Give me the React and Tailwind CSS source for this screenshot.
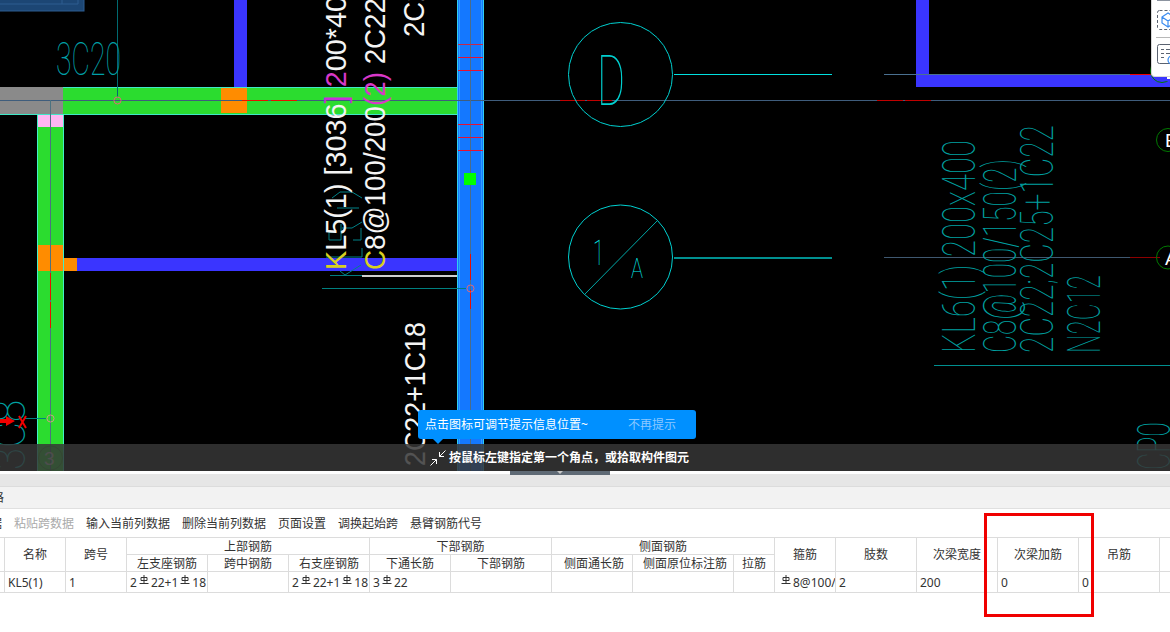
import React from "react";

const UI = { fontFamily: '"Noto Sans", "Noto Sans CJK SC", sans-serif' };
const SLATE = "#3f5d7c";
const TEAL = "#00a0a0";
const THIN = "Roboto";

const rects = [
  [0, 87, 63, 27, "#8a8a8a"],
  [63, 87, 394, 27, "#2bdc2f"],
  [234, 0, 13, 87, "#3a35ff"],
  [221, 88, 26, 25, "#ff8c00"],
  [37, 114, 27, 357, "#2bdc2f"],
  [38, 114, 25, 13, "#ffb6f2"],
  [38, 245, 25, 26, "#ff8c00"],
  [64, 258, 13, 13, "#ff8c00"],
  [77, 258, 380, 13, "#3a35ff"],
  [457, 0, 27, 471, "#1478ff"],
  [929, 74, 241, 13, "#3a35ff"],
  [916, 0, 13, 87, "#3a35ff"],
  [916, 74, 14, 13, "#3a35ff"],
];

const lines = [
  [63, 87.5, 457, 87.5, "#40e8c8"],
  [0, 114.5, 457, 114.5, "#40e8c8"],
  [37.5, 114, 37.5, 471, "#40f0c8"],
  [63.5, 114, 63.5, 471, "#40f0c8"],
  [457.5, 0, 457.5, 471, "#30d0f0"],
  [459.5, 0, 459.5, 471, "#30a0ff"],
  [483.5, 0, 483.5, 471, "#30d0f0"],
  [481.5, 0, 481.5, 471, "#30a0ff"],
  [117.5, 0, 117.5, 97, "#006a70"],
  [0, 100.5, 1170, 100.5, SLATE],
  [50.5, 100, 50.5, 471, "#4c7280"],
  [470.5, 0, 470.5, 471, "#4c6c88"],
  [242, 100.5, 268, 100.5, "#e81000"],
  [271, 100.5, 297, 100.5, "#e81000"],
  [560, 100.5, 585, 100.5, "#c00000"],
  [587, 100.5, 612, 100.5, "#c00000"],
  [877, 100.5, 903, 100.5, "#c00000"],
  [905, 100.5, 931, 100.5, "#c00000"],
  [50.5, 273, 50.5, 300, "#e81000"],
  [50.5, 302, 50.5, 328, "#e81000"],
  [470.5, 254, 470.5, 280, "#e81000"],
  [470.5, 290, 470.5, 309, "#e81000"],
  [458, 44.5, 483, 44.5, "#c82848"],
  [458, 57.5, 483, 57.5, "#e81030"],
  [458, 70.5, 483, 70.5, "#e81030"],
  [458, 124.5, 483, 124.5, "#e81030"],
  [458, 137.5, 483, 137.5, "#e81030"],
  [458, 150.5, 483, 150.5, "#e81030"],
  [322, 288.5, 466, 288.5, "#008080"],
  [362, 275.5, 457, 275.5, "#d0d0d0"],
  [362, 276.5, 457, 276.5, "#d0d0d0"],
  [330, 275.5, 362, 275.5, "#007c80"],
  [25, 418.5, 46, 418.5, "#008080"],
  [674, 74.5, 832, 74.5, "#00e0e0"],
  [674, 257.5, 832, 257.5, "#009090"],
  [674, 258.5, 832, 258.5, "#009090"],
  [884, 74.5, 1130, 74.5, "#4a7090"],
  [1130, 74.5, 1151, 74.5, "#f00000"],
  [884, 257.5, 1130, 257.5, "#3f5870"],
  [1130, 257.5, 1160, 257.5, "#8c0000"],
  [934, 365.5, 1170, 365.5, "#008f8f"],
];

const Rot = ({ x, y, size, length, fill, font, weight, children }) => (
  <text
    transform={`translate(${x} ${y}) rotate(-90)`}
    fontFamily={font || "Liberation Sans"}
    fontWeight={weight}
    fontSize={size}
    fill={fill}
    textLength={length}
    lengthAdjust="spacingAndGlyphs"
  >
    {children}
  </text>
);

const Thin = (props) => <Rot size={46} fill={TEAL} font={THIN} weight={100} {...props} />;

function Canvas() {
  return (
    <svg width="1170" height="471" viewBox="0 0 1170 471" className="block">
      <rect width="1170" height="471" fill="#000" />
      <rect x="-2" y="-2" width="86" height="13" fill="#1c4674" stroke="#2c5c90" />
      <path d="M0 4H78V0M62 0v4" fill="none" stroke="#2c5c90" />

      {rects.map(([x, y, w, h, c], i) => (
        <rect key={i} x={x} y={y} width={w} height={h} fill={c} />
      ))}
      <g shapeRendering="crispEdges">
        {lines.map(([a, b, c, d, s], i) => (
          <line key={i} x1={a} y1={b} x2={c} y2={d} stroke={s} />
        ))}
      </g>
      <rect x="464" y="173" width="12" height="12" fill="#00ff00" />

      <g fill="none" stroke="#e06878">
        <circle cx="117.5" cy="100.5" r="3.5" />
        <circle cx="470.5" cy="288.5" r="3.5" />
        <circle cx="50.5" cy="418.5" r="3.5" stroke="#c8a080" />
      </g>

      {/* axis bubbles */}
      <g fill="none" stroke="#00d0d0">
        <circle cx="620.5" cy="74.5" r="52" />
        <circle cx="620.5" cy="257" r="52" />
        <line x1="584" y1="295" x2="657.5" y2="220.5" stroke="#00a8a8" />
      </g>
      <text x="597" y="105" fontFamily={THIN} fontWeight="100" fontSize="70" fill="#00d0d0" textLength="28" lengthAdjust="spacingAndGlyphs">D</text>
      <text x="593" y="265" fontFamily={THIN} fontWeight="100" fontSize="35" fill="#00f0f0" textLength="11" lengthAdjust="spacingAndGlyphs">1</text>
      <text x="631" y="278" fontFamily={THIN} fontWeight="100" fontSize="28" fill="#00f0f0" textLength="12" lengthAdjust="spacingAndGlyphs">A</text>
      <text x="56" y="75" fontFamily={THIN} fontWeight="100" fontSize="46" fill="#00a0a8" textLength="65" lengthAdjust="spacingAndGlyphs">3C20</text>

      {/* small teal label under the white text */}
      <g fill="none" stroke="#008288">
        <path d="M362 198l-10-6h-12l-8 6M362 222l-10 6h-10M337 208h22M336 232h-7v8h12v-16M361 228v12h-8M362 248v9h-36M361 265l-16 10-5-4" />
      </g>
      <Rot x={346} y={270} size={30} length={290} fill="#f4f4f4">
        <tspan fill="#d8d020">K</tspan>L5(1) [3036<tspan fill="#c830d8">]</tspan> <tspan fill="#d838c8">2</tspan>00*400
      </Rot>
      <Rot x={385} y={270} size={30} length={272} fill="#f4f4f4">
        <tspan fill="#d8d020">C</tspan>8@100/200<tspan fill="#d838c8">(2)</tspan> 2C22
      </Rot>
      <Rot x={424} y={37} size={30} length={66} fill="#f4f4f4">2C22</Rot>
      <Rot x={425} y={466} size={30} length={144} fill="#f4f4f4">2C22+1C18</Rot>

      {/* teal annotation on the right */}
      <Thin x={975} y={353} length={213}>KL6(1) 200x400</Thin>
      <Thin x={1016} y={353} length={194}>C8@100/150(2)</Thin>
      <Thin x={1053} y={353} length={228}>2C22;2C25+1C22</Thin>
      <Thin x={1100} y={353} length={78}>N2C12</Thin>
      <Thin x={1170} y={470} length={48}>CP0</Thin>
      <Thin x={25} y={470} length={70}>3C8</Thin>

      {/* right axis bubbles */}
      <g fill="none" stroke="#007a00">
        <circle cx="1168" cy="140" r="11.5" />
        <circle cx="1168" cy="257.5" r="11.5" />
        <circle cx="1162" cy="71" r="11.5" />
        <circle cx="50.5" cy="458" r="12" stroke="#2a9a2a" />
      </g>
      <text x="1165" y="147" fontFamily="Liberation Sans" fontSize="19" fill="#fff">E</text>
      <text x="1165" y="265" fontFamily="Liberation Sans" fontSize="19" fill="#fff">A</text>
      <text x="44" y="465" fontFamily="Liberation Sans" fontSize="19" fill="#cfcfcf">3</text>
      <rect x="1165" y="77" width="5" height="4" fill="#3a35ff" />
      <rect x="1167" y="77" width="3" height="2" fill="#fff" />

      {/* origin marker */}
      <path d="M0 419h6v-3l9 5-9 5v-3H0z" fill="#f00000" />
      <path d="M19 416l7 12M26 416l-7 12" stroke="#f00000" strokeWidth="2" />
    </svg>
  );
}

const Rebar = () => (
  <svg width="10" height="10" viewBox="0 0 10 10" className="shrink-0 mx-[2px] -mt-[5px]">
    <path d="M5 0v8M2 2.500h6v3H2zM0.500 8.500h9" fill="none" stroke="#333" strokeWidth="1" />
  </svg>
);

const widths = "grid-cols-[5px_61px_61px_81px_81px_81px_81px_101px_81px_101px_41px_61px_81px_81px_81px_81px_10px]";
const cell = "border-r border-b border-[#dcdcdc] flex items-center justify-center overflow-hidden whitespace-nowrap pt-px";
const dataCell = "border-r border-b border-[#dcdcdc] flex items-center pl-[3px] overflow-hidden whitespace-nowrap pt-px";

function Table() {
  return (
    <div className={`grid ${widths} grid-rows-[17px_17px_21px] border-t border-[#dcdcdc] text-xs text-[#333] w-[1170px]`}>
      <div className={`${cell} row-span-2`} />
      <div className={`${cell} row-span-2`}>名称</div>
      <div className={`${cell} row-span-2`}>跨号</div>
      <div className={`${cell} col-span-3`}>上部钢筋</div>
      <div className={`${cell} col-span-2`}>下部钢筋</div>
      <div className={`${cell} col-span-3`}>侧面钢筋</div>
      <div className={`${cell} row-span-2`}>箍筋</div>
      <div className={`${cell} row-span-2`}>肢数</div>
      <div className={`${cell} row-span-2`}>次梁宽度</div>
      <div className={`${cell} row-span-2`}>次梁加筋</div>
      <div className={`${cell} row-span-2`}>吊筋</div>
      <div className={`${cell} row-span-2 border-r-0`} />

      <div className={cell}>左支座钢筋</div>
      <div className={cell}>跨中钢筋</div>
      <div className={cell}>右支座钢筋</div>
      <div className={cell}>下通长筋</div>
      <div className={cell}>下部钢筋</div>
      <div className={`${cell} pl-1`}>侧面通长筋</div>
      <div className={`${cell} pl-1`}>侧面原位标注筋</div>
      <div className={cell}>拉筋</div>

      <div className={dataCell} />
      <div className={dataCell}>KL5(1)</div>
      <div className={dataCell}>1</div>
      <div className={dataCell}>2<Rebar />22+1<Rebar />18</div>
      <div className={dataCell} />
      <div className={dataCell}>2<Rebar />22+1<Rebar />18</div>
      <div className={dataCell}>3<Rebar />22</div>
      <div className={dataCell} />
      <div className={dataCell} />
      <div className={dataCell} />
      <div className={dataCell} />
      <div className={`${dataCell} pl-[4px]`}><Rebar />8@100/</div>
      <div className={dataCell}>2</div>
      <div className={dataCell}>200</div>
      <div className={dataCell}>0</div>
      <div className={dataCell}>0</div>
      <div className={`${dataCell} border-r-0`} />
    </div>
  );
}

export default function App() {
  return (
    <div style={UI} className="relative w-[1170px] h-[632px] overflow-hidden bg-white flex flex-col">
      <div className="relative h-[471px] shrink-0">
        <Canvas />

        {/* side tool panel */}
        <div className="absolute right-0 top-0 w-[19px] h-[77px] bg-white rounded-bl-sm border-l border-b border-[#d8d8d8] overflow-hidden">
          <svg width="19" height="77" viewBox="0 0 19 77" className="block">
            <path d="M5 0h13" stroke="#667080" strokeWidth="1.500" />
            <rect x="5.500" y="10.500" width="20" height="19" rx="2" fill="none" stroke="#5a6270" strokeDasharray="3 2" />
            <path d="M10 17l6-4 6 4v6l-6 4-6-4zM10 17l6 4 6-4M16 21v6" fill="none" stroke="#3b8cf0" strokeWidth="1.200" />
            <path d="M4 37.500h15" stroke="#b8b8b8" />
            <rect x="5.500" y="44.500" width="20" height="19" rx="2" fill="none" stroke="#5a6270" />
            <path d="M9 49.500h3M14 49.500h5M9 53.500h3M14 53.500h5M9 57.500h3" stroke="#5a6270" />
            <circle cx="20" cy="60" r="4" fill="none" stroke="#3b8cf0" strokeWidth="1.200" />
          </svg>
        </div>

        {/* status bar */}
        <div className="absolute left-0 right-0 top-[444px] h-[27px] bg-[#363636]/85 flex items-center pl-[430px] gap-[3px] text-xs font-bold text-white">
          <svg width="16" height="16" viewBox="0 0 16 16" fill="none" stroke="#fff" strokeWidth="1">
            <path d="M15.500 0.500L9.500 6.500M9.500 2v4.500H14M0.500 15.500l6-6M6.500 14V9.500H2" />
          </svg>
          <span className="pt-px">按鼠标左键指定第一个角点，或拾取构件图元</span>
        </div>

        {/* hint bubble */}
        <div className="absolute left-[418px] top-[410px] w-[278px] h-[29px] rounded-[3px] bg-[#0090ff] flex items-center pl-[7px] text-xs text-white">
          <span className="w-[203px]">点击图标可调节提示信息位置~</span>
          <span className="text-[#8cc8ff]">不再提示</span>
          <div className="absolute left-[15px] top-[29px] w-0 h-0 border-x-[5px] border-x-transparent border-t-[5px] border-t-[#0090ff]" />
        </div>
      </div>

      {/* splitter */}
      <div className="h-[3px] shrink-0 bg-white relative">
        <div className="absolute left-[510px] top-0 w-[100px] h-[4px] bg-[#5f6a75] flex justify-center z-10">
          <div className="w-0 h-0 border-x-[3px] border-x-transparent border-t-[3px] border-t-[#c8c8c8]" />
        </div>
      </div>
      <div className="h-[13px] shrink-0 bg-[#e6e6e6] border-b border-[#dcdcdc]" />

      {/* tab strip */}
      <div className="h-[22px] shrink-0 bg-[#f2f2f2] border-b border-[#e0e0e0] flex items-center text-xs text-[#333]">
        <span className="-ml-[44px]">平法表格</span>
      </div>

      {/* toolbar */}
      <div className="h-[28px] shrink-0 flex items-center gap-3 pt-px text-xs text-[#333] whitespace-nowrap">
        <span className="-ml-[58px]">复制跨数据</span>
        <span className="text-[#aaaaaa]">粘贴跨数据</span>
        <span>输入当前列数据</span>
        <span>删除当前列数据</span>
        <span>页面设置</span>
        <span>调换起始跨</span>
        <span>悬臂钢筋代号</span>
      </div>

      <Table />

      {/* red annotation box */}
      <div className="absolute left-[984px] top-[513px] w-[110px] h-[104px] border-[3px] border-[#f00000]" />
    </div>
  );
}
